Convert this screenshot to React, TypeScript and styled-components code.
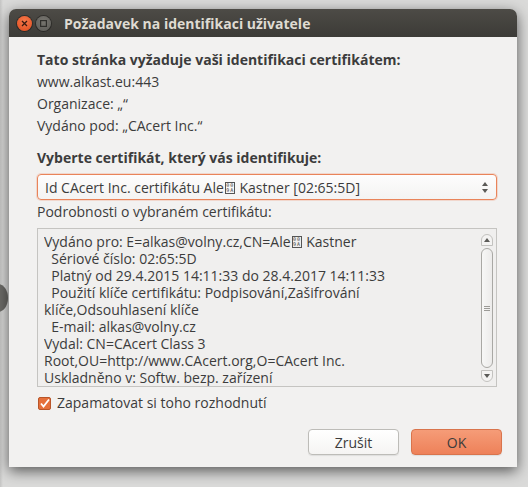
import styled, {createGlobalStyle} from 'styled-components';

const GlobalStyle = createGlobalStyle`
    html, body {
        margin: 0;
        padding: 0;
        background: #d9d9d8;
    }
    body {
        font-family: "Open Sans", "Noto Sans", "DejaVu Sans", sans-serif;
        color: #3c3c3c;
    }
`;

const Desktop = styled.div`
    position: relative;
    width: 528px;
    height: 487px;
    padding: 9px 0 0 9px;
    box-sizing: border-box;
    overflow: hidden;
    background: linear-gradient(90deg, #c4c4c3 0, #dadad9 3px, #dadad9 100%);
`;

// a bit of another window peeking out behind the dialog
const BehindBlob = styled.div`
    position: absolute;
    left: -12px;
    top: 284px;
    width: 20px;
    height: 28px;
    border-radius: 50%;
    background: #6b6a66;
`;

const Window = styled.div`
    position: relative;
    width: 508px;
    height: 458px;
    display: flex;
    flex-direction: column;
    border-radius: 7px 7px 0 0;
    overflow: hidden;
    box-shadow: 0 4px 14px rgba(0, 0, 0, 0.6);
`;

const TitleBar = styled.div`
    height: 28px;
    flex-shrink: 0;
    display: flex;
    align-items: center;
    padding-left: 8px;
    gap: 4px;
    background: linear-gradient(#4d4b46, #3c3b37);
`;

const WinButton = styled.div<{$close?: boolean}>`
    width: 15px;
    height: 15px;
    border-radius: 50%;
    display: flex;
    align-items: center;
    justify-content: center;
    background: ${p => p.$close
        ? 'radial-gradient(circle at 50% 35%, #f77a4c, #df4a1c)'
        : 'radial-gradient(circle at 50% 35%, #77756f, #5c5b57)'};
    box-shadow: 0 0 0 1px rgba(0, 0, 0, 0.35);
`;

const Title = styled.div`
    margin-left: 9px;
    font-size: 14px;
    font-weight: bold;
    color: #dfdbd2;
`;

const Body = styled.div`
    flex: 1;
    display: flex;
    flex-direction: column;
    background: #f2f1f0;
    padding: 12px 20px 13px 28px;
`;

const Line = styled.div<{$bold?: boolean}>`
    font-size: 14px;
    line-height: 22px;
    font-weight: ${p => p.$bold ? 'bold' : 'normal'};
    white-space: nowrap;
`;

const SectionLabel = styled(Line)`
    margin-top: 10px;
`;

const Select = styled.div`
    margin-top: 5px;
    height: 26px;
    box-sizing: border-box;
    display: flex;
    align-items: center;
    justify-content: space-between;
    padding: 0 8px 0 7px;
    border: 1px solid #e9845a;
    border-radius: 4px;
    background: linear-gradient(#fdfdfd, #f4f3f2);
    box-shadow: 0 0 0 1px rgba(240, 140, 100, 0.25);
    font-size: 14px;
    white-space: nowrap;
`;

const Spinner = styled.div`
    display: flex;
    flex-direction: column;
    gap: 3px;
`;

// missing-glyph box, the kind a font draws for a code point it lacks
const Tofu = styled.span`
    display: inline-grid;
    grid-template-columns: 4px 4px;
    grid-template-rows: 5px 5px;
    width: 10px;
    height: 12px;
    box-sizing: border-box;
    border: 1px solid #555;
    margin: 0 1px;
    vertical-align: middle;
    position: relative;
    top: -1px;
    font-size: 5px;
    line-height: 5px;
    text-align: center;
    font-family: "DejaVu Sans Mono", monospace;
`;

const DetailsLabel = styled(Line)`
    margin-top: 1px;
`;

const Details = styled.div`
    margin-top: 5px;
    height: 159px;
    box-sizing: border-box;
    display: flex;
    border: 1px solid #c5c4c1;
    background: #f0efee;
    padding: 4px 3px 0 6px;
`;

const DetailsText = styled.div`
    flex: 1;
    font-size: 14px;
    line-height: 17px;
    white-space: pre;
    overflow: hidden;
`;

const DetailLine = styled.div`
    height: 17px;
`;

const Scrollbar = styled.div`
    width: 12px;
    display: flex;
    flex-direction: column;
    gap: 2px;
    padding: 1px 0 4px;
`;

const ScrollCap = styled.div<{$down?: boolean}>`
    height: 12px;
    box-sizing: border-box;
    display: flex;
    align-items: center;
    justify-content: center;
    border: 1px solid #c3c2bf;
    border-radius: ${p => p.$down ? '0 0 6px 6px' : '6px 6px 0 0'};
    background: #f4f3f2;
`;

const Thumb = styled.div`
    flex: 1;
    border: 1px solid #a9a8a4;
    border-radius: 6px;
    background: linear-gradient(90deg, #f7f7f6, #ecebea);
    display: flex;
    align-items: center;
    justify-content: center;
`;

const Grip = styled.div`
    width: 6px;
    height: 5px;
    background: repeating-linear-gradient(#9c9b97 0 1px, transparent 1px 2px);
`;

const CheckRow = styled.label`
    margin-top: 6px;
    display: flex;
    align-items: center;
    gap: 6px;
    font-size: 14px;
    line-height: 20px;
    padding-left: 1px;
`;

const ButtonRow = styled.div`
    margin-top: 16px;
    margin-right: -5px;
    display: flex;
    justify-content: flex-end;
    gap: 12px;
`;

const Button = styled.button<{$primary?: boolean}>`
    width: 91px;
    height: 26px;
    border-radius: 4px;
    font-family: inherit;
    font-size: 14px;
    color: #3c3c3c;
    border: 1px solid ${p => p.$primary ? '#d9744c' : '#bdbcb8'};
    background: ${p => p.$primary
        ? 'linear-gradient(#f59c78, #ee8159)'
        : 'linear-gradient(#ffffff, #f5f4f3)'};
    box-shadow: 0 1px 1px rgba(0, 0, 0, 0.08);
`;

const detailLines = [
    'Vydáno pro: E=alkas@volny.cz,CN=Ale',
    '  Sériové číslo: 02:65:5D',
    '  Platný od 29.4.2015 14:11:33 do 28.4.2017 14:11:33',
    '  Použití klíče certifikátu: Podpisování,Zašifrování',
    'klíče,Odsouhlasení klíče',
    '  E-mail: alkas@volny.cz',
    'Vydal: CN=CAcert Class 3',
    'Root,OU=http://www.CAcert.org,O=CAcert Inc.',
    'Uskladněno v: Softw. bezp. zařízení',
];

const BadChar = () => (
    <Tofu>
        <span>0</span><span>0</span><span>9</span><span>A</span>
    </Tofu>
);

const CloseIcon = () => (
    <svg width="7" height="7" viewBox="0 0 7 7">
        <path d="M1 1 L6 6 M6 1 L1 6" stroke="#3a1a10" strokeWidth="1.3" />
    </svg>
);

const MaxIcon = () => (
    <svg width="7" height="7" viewBox="0 0 7 7">
        <rect x="0.6" y="0.6" width="5.8" height="5.8" fill="none" stroke="#2f2e2b" strokeWidth="1.2" />
    </svg>
);

const Triangle = ({down}: {down?: boolean}) => (
    <svg width="6" height="4" viewBox="0 0 6 4" style={{display: 'block'}}>
        <path d={down ? 'M0 0 H6 L3 4 Z' : 'M0 4 H6 L3 0 Z'} fill="#5b5a57" />
    </svg>
);

const CheckIcon = () => (
    <svg width="13" height="13" viewBox="0 0 13 13">
        <rect x="0.5" y="0.5" width="12" height="12" rx="1.5" fill="#e5703b" stroke="#b85529" />
        <path d="M3 6.5 L5.5 9.5 L11 2.5" fill="none" stroke="#ffffff" strokeWidth="1.8" />
    </svg>
);

const App: React.FC = () => {
    return <>
        <GlobalStyle />
        <Desktop>
            <BehindBlob />
            <Window>
                <TitleBar>
                    <WinButton $close><CloseIcon /></WinButton>
                    <WinButton><MaxIcon /></WinButton>
                    <Title>Požadavek na identifikaci uživatele</Title>
                </TitleBar>
                <Body>
                    <Line $bold>Tato stránka vyžaduje vaši identifikaci certifikátem:</Line>
                    <Line>www.alkast.eu:443</Line>
                    <Line>Organizace: „“</Line>
                    <Line>Vydáno pod: „CAcert Inc.“</Line>

                    <SectionLabel $bold>Vyberte certifikát, který vás identifikuje:</SectionLabel>
                    <Select>
                        <span>Id CAcert Inc. certifikátu Ale<BadChar /> Kastner [02:65:5D]</span>
                        <Spinner>
                            <Triangle />
                            <Triangle down />
                        </Spinner>
                    </Select>

                    <DetailsLabel>Podrobnosti o vybraném certifikátu:</DetailsLabel>
                    <Details>
                        <DetailsText>
                            {detailLines.map((l, i) => (
                                <DetailLine key={i}>
                                    {l}
                                    {i === 0 && <><BadChar /> Kastner</>}
                                </DetailLine>
                            ))}
                        </DetailsText>
                        <Scrollbar>
                            <ScrollCap><Triangle /></ScrollCap>
                            <Thumb><Grip /></Thumb>
                            <ScrollCap $down><Triangle down /></ScrollCap>
                        </Scrollbar>
                    </Details>

                    <CheckRow>
                        <CheckIcon />
                        <span>Zapamatovat si toho rozhodnutí</span>
                    </CheckRow>

                    <ButtonRow>
                        <Button>Zrušit</Button>
                        <Button $primary>OK</Button>
                    </ButtonRow>
                </Body>
            </Window>
        </Desktop>
    </>;
};

export default App;
